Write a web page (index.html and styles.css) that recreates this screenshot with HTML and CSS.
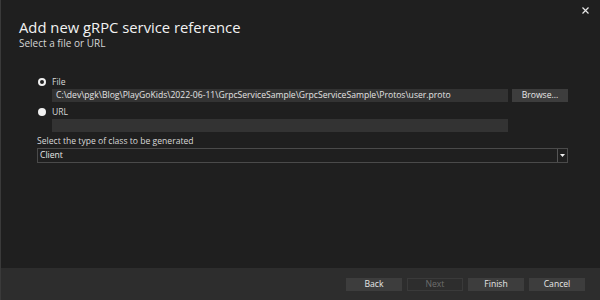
FILE: index.html
```html
<!DOCTYPE html>
<html lang="en">
<head>
  <meta charset="UTF-8">
  <title>Add new gRPC service reference</title>
  <link rel="stylesheet" href="styles.css">
</head>
<body>
  <div class="dialog">
    <div class="head">
      <div class="titles">
        <h1>Add new gRPC service reference</h1>
        <p class="subtitle">Select a file or URL</p>
      </div>
      <button class="close" aria-label="Close">
        <svg width="7" height="7" viewBox="0 0 7 7"><path d="M0.5 0.5 L6.5 6.5 M6.5 0.5 L0.5 6.5" stroke="#e8e8e8" stroke-width="1.2"/></svg>
      </button>
    </div>

    <div class="main">
      <label class="option">
        <span class="radio radio-ring"></span>
        <span>File</span>
      </label>
      <div class="field">
        <div class="input">C:\dev\pgk\Blog\PlayGoKids\2022-06-11\GrpcServiceSample\GrpcServiceSample\Protos\user.proto</div>
        <button class="btn">Browse...</button>
      </div>

      <label class="option option-url">
        <span class="radio radio-dot"></span>
        <span>URL</span>
      </label>
      <div class="field">
        <div class="input"></div>
      </div>

      <p class="type-label">Select the type of class to be generated</p>
      <div class="combo">
        <span class="combo-value">Client</span>
        <span class="drop">
          <svg width="5" height="3" viewBox="0 0 5 3"><path d="M0 0 H5 L2.5 3 Z" fill="#f0f0f0"/></svg>
        </span>
      </div>
    </div>

    <div class="footer">
      <button class="btn">Back</button>
      <button class="btn btn-disabled">Next</button>
      <button class="btn">Finish</button>
      <button class="btn">Cancel</button>
    </div>
  </div>
</body>
</html>
```

FILE: styles.css
```css
body {
  margin: 0;
  background: #1f1f1f;
  font-family: 'Open Sans', 'Noto Sans', sans-serif;
  color: #d8d8d8;
}

.dialog {
  width: 600px;
  height: 300px;
  box-sizing: border-box;
  border-left: 1px solid #3a3a3a;
  background: #1f1f1f;
  display: flex;
  flex-direction: column;
}

.head {
  display: flex;
  justify-content: space-between;
  padding-left: 18px;
}

.titles {
  padding-top: 17px;
}

h1 {
  margin: 0;
  font-size: 14.8px;
  font-weight: 400;
  line-height: 20px;
  color: #f2f2f2;
}

.subtitle {
  margin: 0;
  font-size: 10px;
  line-height: 12px;
  color: #d6d6d6;
}

.close {
  margin: 7px 11px 0 0;
  padding: 0;
  width: 7px;
  height: 7px;
  border: none;
  background: none;
  display: flex;
}

.main {
  flex: 1;
  padding: 27px 0 0 36px;
  font-size: 8.6px;
}

.option {
  display: flex;
  align-items: center;
  gap: 6px;
  height: 12px;
  font-size: 8.6px;
  color: #d8d8d8;
}

.option-url {
  margin-top: 4px;
}

.radio {
  width: 8px;
  height: 8px;
  box-sizing: border-box;
  border-radius: 50%;
  margin-left: 1px;
}

.radio-ring {
  border: 2px solid #f0f0f0;
  background: #1f1f1f;
}

.radio-dot {
  background: #f0f0f0;
}

.field {
  display: flex;
  gap: 4px;
  margin: 1px 0 0 15px;
}

.input {
  width: 456px;
  height: 13px;
  box-sizing: border-box;
  padding-left: 4px;
  background: #333333;
  font-size: 8.6px;
  line-height: 13px;
  color: #e4e4e4;
  white-space: nowrap;
  overflow: hidden;
}

.btn {
  width: 56px;
  height: 13px;
  padding: 0;
  border: 1px solid #3d3d3d;
  background: #3d3d3d;
  font-family: inherit;
  font-size: 8.6px;
  line-height: 11px;
  color: #e8e8e8;
}

.btn-disabled {
  background: #2d2d2d;
  border-color: #3a3a3a;
  color: #6e6e6e;
}

.type-label {
  margin: 3px 0 0;
  font-size: 8.6px;
  line-height: 12px;
  color: #d8d8d8;
}

.combo {
  margin-top: 1px;
  width: 531px;
  height: 15px;
  box-sizing: border-box;
  border: 1px solid #4a4a4a;
  display: flex;
}

.combo-value {
  flex: 1;
  padding-left: 2px;
  font-size: 8.6px;
  line-height: 13px;
  color: #e8e8e8;
}

.drop {
  width: 9px;
  border-left: 1px solid #555555;
  display: flex;
  align-items: center;
  justify-content: center;
}

.footer {
  height: 32px;
  box-sizing: border-box;
  padding: 10px 15px 0 0;
  background: #2d2d2d;
  display: flex;
  justify-content: flex-end;
  align-items: flex-start;
  gap: 5px;
}
```
